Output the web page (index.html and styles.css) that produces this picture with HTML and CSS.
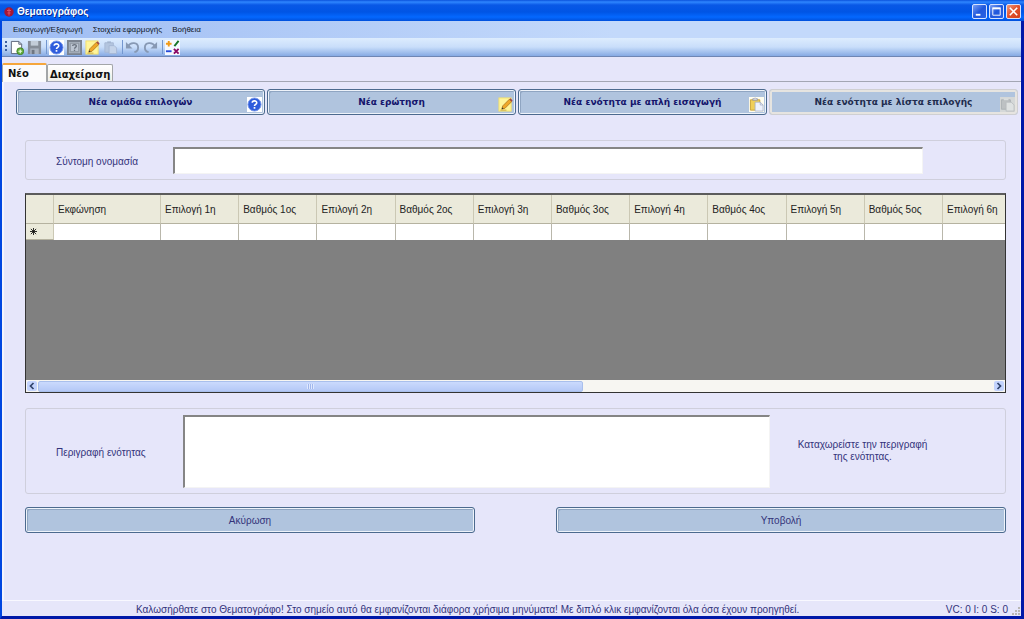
FILE: index.html
```html
<!DOCTYPE html>
<html lang="el">
<head>
<meta charset="utf-8">
<title>Θεματογράφος</title>
<link rel="stylesheet" href="styles.css">
</head>
<body>
<svg class="defs" width="0" height="0" aria-hidden="true">
  <symbol id="help" viewBox="0 0 16 16">
    <rect width="16" height="16" fill="#fff"/>
    <circle cx="8" cy="8" r="7" fill="#2f5cdc" stroke="#7b9bea"/>
    <path d="M5.6 6.2C5.6 3.4 10.4 3.4 10.4 6.1C10.4 7.8 8 7.8 8 9.6" fill="none" stroke="#fff" stroke-width="1.7"/>
    <rect x="7.1" y="10.7" width="1.8" height="1.8" fill="#fff"/>
  </symbol>
  <symbol id="edit" viewBox="0 0 16 16">
    <rect x="1" y="1" width="13" height="14" fill="#fff59a" stroke="#f3e06a"/>
    <path d="M4 13L5 9.500L12 2.500L14.500 5L7.500 12Z" fill="#f0a828" stroke="#a8741c" stroke-width=".8"/>
    <path d="M12 2.500L13.300 1.200L15.600 3.600L14.500 5Z" fill="#a04848"/>
    <path d="M4 13L4.600 11L6 12.400Z" fill="#333"/>
    <path d="M2.500 14H9" stroke="#c9a640"/>
  </symbol>
  <symbol id="paste" viewBox="0 0 16 16">
    <rect width="16" height="16" fill="#fffdf0"/>
    <path d="M1.500 3H11.500V14H1.500Z" fill="#f0cf58" stroke="#c8a238"/>
    <path d="M4 3.500V1.800H5.500L6.500 .8L7.500 1.800H9V3.500Z" fill="#d9dbe6" stroke="#8d8f9c" stroke-width=".7"/>
    <path d="M6.500 5.500H12L15 8.500V15H6.500Z" fill="#eef2fc" stroke="#a3acc4" stroke-width=".8"/>
    <path d="M12 5.500V8.500H15" fill="none" stroke="#a3acc4" stroke-width=".8"/>
  </symbol>
  <symbol id="paste-off" viewBox="0 0 16 16">
    <rect width="16" height="16" fill="#d5d8d8"/>
    <path d="M1.500 3H11V13H1.500Z" fill="#bdc1c3" stroke="#abb0b4"/>
    <path d="M4 3.500V1.500H9V3.500Z" fill="#dadddd"/>
    <path d="M6.500 5.500H12L15 8.500V15H6.500Z" fill="#dfe2e2" stroke="#b6babc" stroke-width=".8"/>
  </symbol>
</svg>
<div class="window">
  <header class="titlebar">
    <svg class="app-icon" viewBox="0 0 10 10" aria-hidden="true"><circle cx="5" cy="5" r="4.700" fill="#a61635"/><path d="M5 1.500V8.500M3 3.500H7M3.500 6H6.500" stroke="#d9526a" stroke-width="1"/></svg>
    <h1 class="title">Θεματογράφος</h1>
    <div class="captions">
      <button class="caption" aria-label="Ελαχιστοποίηση"><svg viewBox="0 0 14 14"><path d="M3 10.500H8" stroke="#fff" stroke-width="2"/></svg></button>
      <button class="caption" aria-label="Μεγιστοποίηση"><svg viewBox="0 0 14 14"><path d="M3 4H11V11H3Z" fill="none" stroke="#fff"/><path d="M2.500 3.500H11.500" stroke="#fff" stroke-width="2"/></svg></button>
      <button class="caption close" aria-label="Κλείσιμο"><svg viewBox="0 0 14 14"><path d="M3 3L11 11M11 3L3 11" stroke="#fff" stroke-width="1.700"/></svg></button>
    </div>
  </header>
  <div class="client">
    <nav class="menu">
      <button class="menu-item">Εισαγωγή/Εξαγωγή</button>
      <button class="menu-item">Στοιχεία εφαρμογής</button>
      <button class="menu-item">Βοήθεια</button>
    </nav>
    <div class="toolbar">
      <span class="grip"></span>
      <button class="tool" aria-label="Νέο"><svg viewBox="0 0 16 16"><path d="M2.500 1.500H10.500L13.500 4.500V14.500H2.500Z" fill="#fff" stroke="#596175"/><path d="M10.500 1.500V4.500H13.500" fill="none" stroke="#596175"/><circle cx="12" cy="12" r="3.700" fill="#62ae3b" stroke="#3b7a24" stroke-width=".8"/><path d="M12 10V14M10 12H14" stroke="#e4f8d8" stroke-width="1.300"/></svg></button>
      <button class="tool" aria-label="Αποθήκευση"><svg viewBox="0 0 16 16"><path d="M1 1H15V15H1Z" fill="#858c98"/><path d="M4 1H12V6H4Z" fill="#c3ccd9"/><path d="M3.500 9H12.500V15H3.500Z" fill="#aab3c1"/><path d="M5 10.500H8V15H5Z" fill="#6f7682"/></svg></button>
      <span class="sep"></span>
      <button class="tool" aria-label="Νέα ομάδα επιλογών"><svg><use href="#help"/></svg></button>
      <button class="tool" aria-label="Ομάδα επιλογών"><svg viewBox="0 0 16 16"><path d="M1 1H15V15H1Z" fill="#a8b1bd" stroke="#7b838f" stroke-width="2"/><path d="M3.500 3.500H12.500V12.500H3.500Z" fill="#bcc5d1" stroke="#8b939f"/><path d="M6 6.500C6 4.300 10 4.300 10 6.500C10 7.900 8 7.800 8 9.300" fill="none" stroke="#69717d" stroke-width="1.400"/><path d="M7.300 10.300H8.700V11.700H7.300Z" fill="#69717d"/></svg></button>
      <button class="tool" aria-label="Νέα ερώτηση"><svg><use href="#edit"/></svg></button>
      <button class="tool" aria-label="Επικόλληση"><svg viewBox="0 0 16 16"><path d="M2 3H11V13H2Z" fill="#b3c5df" stroke="#a5b8d4"/><path d="M4.500 3V1.500H8.500V3Z" fill="#9fb1cc"/><path d="M6.500 6H12L14.500 8.500V14.500H6.500Z" fill="#c4d3e9" stroke="#a5b8d4"/></svg></button>
      <span class="sep"></span>
      <button class="tool" aria-label="Αναίρεση"><svg viewBox="0 0 16 16"><path d="M3 7C6 1.500 14 2.500 14 8C14 10.500 12.500 12.500 10 13" fill="none" stroke="#8799b4" stroke-width="2"/><path d="M1 2V9H8Z" fill="#8799b4"/></svg></button>
      <button class="tool" aria-label="Επανάληψη"><svg viewBox="0 0 16 16"><path d="M13 7C10 1.500 2 2.500 2 8C2 10.500 3.500 12.500 6 13" fill="none" stroke="#8799b4" stroke-width="2"/><path d="M15 2V9H8Z" fill="#8799b4"/></svg></button>
      <span class="sep"></span>
      <button class="tool" aria-label="Υπολογισμός"><svg viewBox="0 0 16 16"><path d="M0 0H16V16H0Z" fill="#f6f9ff"/><path d="M4 1V7M1 4H7" stroke="#f09a18" stroke-width="2"/><path d="M10 6.500L14.500 1" stroke="#167326" stroke-width="2"/><path d="M1 12H7" stroke="#2449d8" stroke-width="2"/><path d="M9.500 9.500L14.500 14.500M14.500 9.500L9.500 14.500" stroke="#8a0864" stroke-width="2"/></svg></button>
    </div>
    <div class="tabs" role="tablist">
      <button class="tab active" role="tab" aria-selected="true">Νέο</button>
      <button class="tab" role="tab" aria-selected="false">Διαχείριση</button>
    </div>
    <main class="page">
      <div class="actions">
        <button class="btn action"><span>Νέα ομάδα επιλογών</span><svg class="badge"><use href="#help"/></svg></button>
        <button class="btn action"><span>Νέα ερώτηση</span><svg class="badge"><use href="#edit"/></svg></button>
        <button class="btn action"><span>Νέα ενότητα με απλή εισαγωγή</span><svg class="badge"><use href="#paste"/></svg></button>
        <button class="btn action" disabled><span>Νέα ενότητα με λίστα επιλογής</span><svg class="badge"><use href="#paste-off"/></svg></button>
      </div>
      <form class="form">
        <div class="group name-group">
          <label class="label" for="short-name">Σύντομη ονομασία</label>
          <input class="field" id="short-name" type="text">
        </div>
        <div class="datagrid">
          <table class="grid">
            <colgroup><col class="col-mark"><col class="col-text"><col span="10"><col class="col-last"></colgroup>
            <thead>
              <tr><th></th><th>Εκφώνηση</th><th>Επιλογή 1η</th><th>Βαθμός 1ος</th><th>Επιλογή 2η</th><th>Βαθμός 2ος</th><th>Επιλογή 3η</th><th>Βαθμός 3ος</th><th>Επιλογή 4η</th><th>Βαθμός 4ος</th><th>Επιλογή 5η</th><th>Βαθμός 5ος</th><th>Επιλογή 6η</th></tr>
            </thead>
            <tbody>
              <tr><th class="mark" scope="row"><svg viewBox="0 0 8 8" aria-label="Νέα γραμμή"><path d="M4 0V8M0 4H8M1 1L7 7M7 1L1 7" stroke="#111"/></svg></th><td></td><td></td><td></td><td></td><td></td><td></td><td></td><td></td><td></td><td></td><td></td><td></td></tr>
            </tbody>
          </table>
          <div class="scroll">
            <button class="arrow" type="button" aria-label="Αριστερά"><svg viewBox="0 0 10 10"><path d="M6.500 2L3.500 5L6.500 8" fill="none" stroke="#31436b" stroke-width="1.700"/></svg></button>
            <div class="track"><div class="thumb"><span class="notch"></span></div></div>
            <button class="arrow" type="button" aria-label="Δεξιά"><svg viewBox="0 0 10 10"><path d="M3.500 2L6.500 5L3.500 8" fill="none" stroke="#31436b" stroke-width="1.700"/></svg></button>
          </div>
        </div>
        <div class="group desc-group">
          <label class="label" for="description">Περιγραφή ενότητας</label>
          <textarea class="field area" id="description"></textarea>
          <p class="hint">Καταχωρείστε την περιγραφή<br>της ενότητας.</p>
        </div>
        <div class="submit-row">
          <button class="btn" type="button">Ακύρωση</button>
          <button class="btn" type="button">Υποβολή</button>
        </div>
      </form>
    </main>
    <footer class="status">
      <span class="message">Καλωσήρθατε στο Θεματογράφο! Στο σημείο αυτό θα εμφανίζονται διάφορα χρήσιμα μηνύματα! Με διπλό κλικ εμφανίζονται όλα όσα έχουν προηγηθεί.</span>
      <span class="counts">VC: 0 I: 0 S: 0</span>
      <svg class="resize" viewBox="0 0 9 9" aria-hidden="true"><path d="M6 0H8V2H6ZM3 3H5V5H3ZM6 3H8V5H6ZM0 6H2V8H0ZM3 6H5V8H3ZM6 6H8V8H6Z" fill="#b9b7b4"/></svg>
    </footer>
  </div>
</div>
</body>
</html>
```
FILE: styles.css
```css
* { box-sizing: border-box; }
body {
  margin: 0;
  background: #e6e6fa;
  color: #33337a;
  font-family: "Liberation Sans", Arial, sans-serif;
  font-size: 10px;
}
button { font: inherit; color: inherit; padding: 0; border: 0; background: none; }
.defs { position: absolute; }

.window {
  display: flex;
  flex-direction: column;
  min-height: 100vh;
  border: solid;
  border-width: 0 3px 3px 2px;
  border-color: #0046e0 #0018a8 #0018a8 #0046e0;
}
.titlebar {
  display: flex;
  align-items: center;
  height: 21px;
  margin: 0 -3px 0 -2px;
  padding: 2px 3px 0 4px;
  background: linear-gradient(#0a52dc 0, #2f86ff 2px, #0958e6 5px, #0055e5 12px, #0468ff 17px, #0050dc 21px);
}
.app-icon { width: 10px; height: 10px; }
.title {
  flex: 1;
  margin: 0 0 0 3px;
  color: #fff;
  font: bold 10px "Liberation Sans", Arial, sans-serif;
  text-shadow: 1px 1px #0a2a90;
}
.captions { display: flex; gap: 2px; }
.caption {
  width: 15px;
  height: 15px;
  border: 1px solid #d7e3ff;
  border-radius: 2px;
  background: linear-gradient(135deg, #7ba0f5, #2158dc 50%, #2a62e4);
}
.caption svg { display: block; width: 13px; height: 13px; }
.close { background: linear-gradient(135deg, #f0997c, #e0512c 50%, #d2401c); }

.client { flex: 1; display: flex; flex-direction: column; background: #e6e6fa; }
.menu {
  display: flex;
  align-items: center;
  gap: 10px;
  height: 17px;
  padding-left: 11px;
  background: linear-gradient(90deg, #9fbdf3, #c3d9fb 60%);
  color: #101828;
  font-size: 8px;
}
.toolbar {
  display: flex;
  align-items: center;
  gap: 2px;
  height: 19px;
  padding-left: 3px;
  border-bottom: 1px solid #6f86b4;
  background: linear-gradient(#ddecfe, #c9defa 50%, #86aae4);
}
.grip { width: 2px; height: 12px; background: repeating-linear-gradient(#3c5f9e 0 2px, transparent 2px 4px); }
.tool { width: 16px; height: 16px; }
.tool svg { display: block; width: 15px; height: 15px; }
.sep { width: 1px; height: 14px; margin-left: 1px; background: #7397d0; }

.tabs { display: flex; align-items: flex-end; height: 25px; border-bottom: 1px solid #a3a6b4; }
.tab {
  height: 17px;
  padding: 2px 2px 0;
  border: 1px solid #a3a6a8;
  border-bottom: 0;
  border-radius: 2px 2px 0 0;
  background: linear-gradient(#fff, #f0efe8);
  color: #111;
  font: bold 10px "DejaVu Sans", sans-serif;
}
.active {
  height: 19px;
  width: 45px;
  margin-bottom: -1px;
  padding: 0 0 1px 5px;
  border-top: 2px solid #f5a63c;
  background: #fbfbfc;
  text-align: left;
}

.page { flex: 1; padding: 7px 2px 0 12px; border-left: 2px solid #f4f4fd; border-right: 1px solid #f4f4fd; }
.btn {
  min-width: 0;
  height: 26px;
  border: 1px solid #4c6a8e;
  border-radius: 3px;
  background: #b0c4de;
  box-shadow: inset 0 0 0 1px #eef3fa, inset 2px 2px #8fa5c2;
}
.actions { display: grid; grid-template-columns: repeat(4, 1fr); gap: 2px; }
.action {
  position: relative;
  color: #15156c;
  font: bold 9px "DejaVu Sans", sans-serif;
}
.action:disabled { border-color: #cfcfd2; color: #1f2c4e; box-shadow: inset 0 0 0 2px #e6e4e0; }
.badge { position: absolute; right: 2px; bottom: 2px; width: 15px; height: 15px; }

.form { display: flex; flex-direction: column; margin: 25px 12px 0 9px; }
.group { display: flex; align-items: center; border: 1px solid #cfcfdc; border-radius: 3px; }
.name-group { height: 40px; }
.label { padding: 3px 0 0 30px; flex: 0 0 15%; }
.field {
  height: 27px;
  margin: 0;
  padding: 2px;
  border: 1px solid;
  border-width: 2px 1px 1px 2px;
  border-color: #858585 #f4f4f4 #f4f4f4 #858585;
  background: #fff;
  font: inherit;
}
.name-group .field { flex: 0 1 750px; }
.desc-group { height: 86px; margin-top: 15px; }
.desc-group .label { flex-basis: 16%; }
.area { flex: 0 0 60%; height: 73px; resize: none; }
.hint { flex: 1; margin: 0 50px 0 0; text-align: center; line-height: 12px; }

.datagrid {
  display: flex;
  flex-direction: column;
  height: 200px;
  margin-top: 13px;
  border: 1px solid #333;
  border-top: 2px solid #5b5b5b;
  background: #808080;
  overflow: hidden;
}
.grid { width: 100%; table-layout: fixed; border-collapse: separate; border-spacing: 0; color: #222; }
.col-mark { width: 28px; }
.col-text { width: 107px; }
.col-last { width: 62px; }
.grid th {
  height: 29px;
  padding: 1px 0 0 4px;
  border-right: 1px solid #cbc8b4;
  border-bottom: 1px solid #b5b2a0;
  background: #ebeadb;
  font-weight: normal;
  text-align: left;
  white-space: nowrap;
}
.grid td { height: 16px; padding: 0; border-right: 1px solid #b9b7ab; background: #fff; }
.grid .mark { height: 16px; padding-top: 0; }
.grid th:last-child, .grid td:last-child { border-right: 0; }
.mark svg { display: block; width: 7px; height: 7px; }
.scroll { display: flex; align-items: center; height: 12px; margin-top: auto; padding: 0 1px; background: #f7f6f2; }
.arrow { width: 10px; height: 10px; border-radius: 2px; background: #c3d3fd; }
.arrow svg { display: block; width: 10px; height: 10px; }
.track { flex: 1; padding-left: 1px; }
.thumb {
  display: flex;
  align-items: center;
  justify-content: center;
  width: 57%;
  height: 11px;
  border: 1px solid #a9bfec;
  border-radius: 2px;
  background: linear-gradient(#cbdafd, #b4c8f6);
}
.notch { width: 7px; height: 5px; background: repeating-linear-gradient(90deg, #dfe8fe 0 1px, #a1b7ec 1px 2px); }

.submit-row { display: grid; grid-template-columns: 1fr 1fr; gap: 81px; margin-top: 13px; }

.status {
  display: flex;
  align-items: center;
  height: 16px;
  padding: 2px 0 0 134px;
  border-top: 1px solid #f8f8ff;
  white-space: nowrap;
}
.message { flex: 1; }
.resize { align-self: flex-end; width: 9px; height: 9px; margin-left: 4px; }
```
